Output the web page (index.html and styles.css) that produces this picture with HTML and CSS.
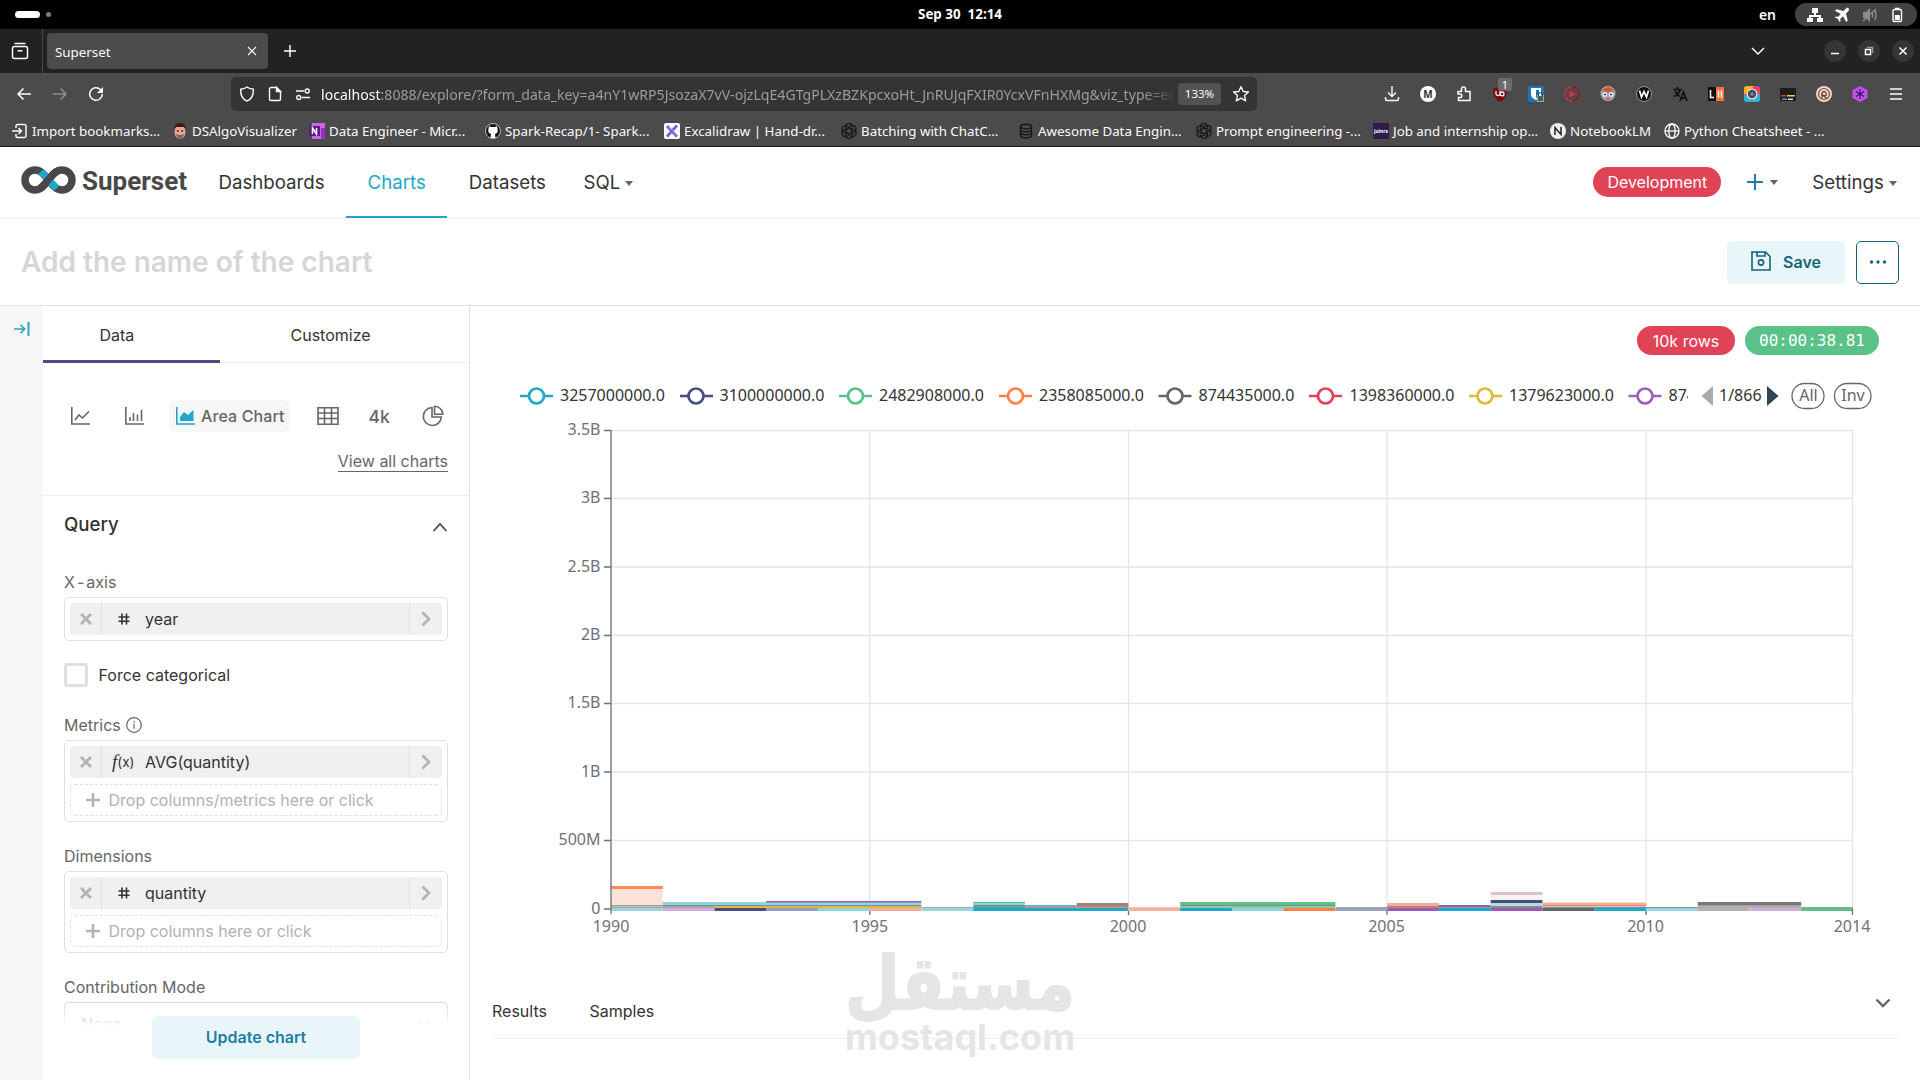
FILE: index.html
```html
<!DOCTYPE html>
<html lang="en">
<head>
    <meta charset="UTF-8">
    <meta name="viewport" content="width=device-width, initial-scale=1.0">
    <title>Superset</title>
    <link rel="stylesheet" href="styles.css">
</head>
<body>

    <!-- Desktop top bar -->
    <div class="topbar">
        <div class="workspaces"><span class="ws-active"></span><span class="ws-dot"></span></div>
        <div class="clock">Sep 30&nbsp; 12:14</div>
        <div class="status">
            <span class="lang">en</span>
            <div class="tray">
                <svg width="16" height="16" viewBox="0 0 16 16" fill="#fff"><path d="M5 1h6v5H9v2h5v3h2v4h-6v-4h2v-1H4v1h2v4H0v-4h2V8h5V6H5z"/></svg>
                <svg width="16" height="16" viewBox="0 0 16 16" fill="#fff"><path d="M14.5 1.2c-.8-.7-2-.3-3 .8L9.600 4 2.500 2.200 1 3.700l5.800 3.200-2.600 2.800-2.300-.3L1 10.500l3 1.500 1.500 3 1.100-1-.3-2.300 2.700-2.500 3.200 5.700 1.500-1.500L12 6.500l2-2c1-1 1.300-2.500.5-3.300z"/></svg>
                <svg width="16" height="16" viewBox="0 0 16 16" fill="#8b8b8b" stroke="#8b8b8b"><path stroke="none" d="M1 5h3l4-4v14l-4-4H1z"/><path fill="none" stroke-width="1.500" d="M10 5.500q1.500 2.500 0 5M12.500 3q3 5 0 10M1 14L14 2"/></svg>
                <svg width="16" height="16" viewBox="0 0 16 16"><rect x="4" y="2.500" width="8.500" height="12" rx="1.500" fill="none" stroke="#fff" stroke-width="1.400"/><path fill="#fff" d="M6 .8h4.500v2H6zM5.800 8h5v5h-5z"/></svg>
            </div>
        </div>
    </div>

    <!-- Browser tabs -->
    <div class="tabstrip">
        <div class="tab-overview">
            <svg width="18" height="18" viewBox="0 0 18 18" fill="none" stroke="#fbfbfe" stroke-width="1.500"><path d="M3.500 1.500h11"/><rect x="1.500" y="4.500" width="15" height="12" rx="2"/><path d="M6.500 8.800h5"/></svg>
        </div>
        <div class="tab">
            <span>Superset</span>
            <svg width="10" height="10" viewBox="0 0 10 10" stroke="#fbfbfe" stroke-width="1.100"><path d="M1 1l8 8M9 1L1 9"/></svg>
        </div>
        <svg class="new-tab" width="14" height="14" viewBox="0 0 14 14" stroke="#fbfbfe" stroke-width="1.500"><path d="M7 1v12M1 7h12"/></svg>
        <div class="window-controls">
            <svg class="list-tabs" width="14" height="10" viewBox="0 0 14 10" fill="none" stroke="#fbfbfe" stroke-width="1.500"><path d="M1 2l6 6 6-6"/></svg>
            <span class="win-btn"><svg width="10" height="10" viewBox="0 0 10 10" stroke="#fff" stroke-width="1.500"><path d="M1 7.500h8"/></svg></span>
            <span class="win-btn"><svg width="10" height="10" viewBox="0 0 10 10" fill="none" stroke="#fff" stroke-width="1.500"><rect x="1.500" y="3.500" width="5" height="5"/><path stroke="#999" d="M3 1.500h5.500V7"/></svg></span>
            <span class="win-btn"><svg width="10" height="10" viewBox="0 0 10 10" stroke="#fff" stroke-width="1.500"><path d="M1.500 1.500l7 7M8.500 1.500l-7 7"/></svg></span>
        </div>
    </div>

    <!-- Address bar and extensions -->
    <div class="navbar">
        <div class="nav-buttons">
            <svg width="16" height="16" viewBox="0 0 16 16" fill="none" stroke="#fbfbfe" stroke-width="1.500"><path d="M15 8H2M7.500 2.500L2 8l5.500 5.500"/></svg>
            <svg width="16" height="16" viewBox="0 0 16 16" fill="none" stroke="#8f8f8f" stroke-width="1.500"><path d="M1 8h13M8.500 2.500L14 8l-5.500 5.500"/></svg>
            <svg width="16" height="16" viewBox="0 0 16 16" fill="none" stroke="#fbfbfe" stroke-width="1.500"><path d="M12.500 3.600A6.300 6.300 0 1 0 14.300 8"/><path fill="#fbfbfe" stroke="none" d="M15 1v6H9z"/></svg>
        </div>
        <div class="urlbar">
            <svg width="16" height="16" viewBox="0 0 16 16" fill="none" stroke="#fbfbfe" stroke-width="1.400"><path d="M8 1c2 1.500 4 2 6.300 2.200C14.600 8.500 13 13 8 15 3 13 1.400 8.500 1.700 3.200 4 3 6 2.500 8 1z"/></svg>
            <svg width="16" height="16" viewBox="0 0 16 16" fill="none" stroke="#fbfbfe" stroke-width="1.400"><path d="M9.500 1.500H4A1.500 1.500 0 0 0 2.500 3v10A1.500 1.500 0 0 0 4 14.500h8a1.500 1.500 0 0 0 1.500-1.500V5.500z"/><path fill="#fbfbfe" d="M9.500 1.500v4h4z"/></svg>
            <svg width="16" height="16" viewBox="0 0 16 16" fill="none" stroke="#fbfbfe" stroke-width="1.400"><path d="M1 5h8M7 11.500h8"/><circle cx="12.200" cy="5" r="2"/><circle cx="3.800" cy="11.500" r="2"/></svg>
            <div class="url"><b>localhost</b>:8088/explore/?form_data_key=a4nY1wRP5JsozaX7vV-ojzLqE4GTgPLXzBZKpcxoHt_JnRUJqFXIR0YcxVFnHXMg&amp;viz_type=ec</div>
            <span class="zoom">133%</span>
            <svg width="18" height="18" viewBox="0 0 18 18" fill="none" stroke="#fbfbfe" stroke-width="1.300" stroke-linejoin="round"><path d="M9 1.500l2.200 5 5.300.5-4 3.600 1.200 5.300L9 13.100l-4.700 2.800 1.200-5.300-4-3.600 5.300-.5z"/></svg>
        </div>
        <div class="extensions">
            <svg width="16" height="16" viewBox="0 0 16 16" fill="none" stroke="#fbfbfe" stroke-width="1.400"><path d="M8 0v10M4 6.500l4 4 4-4M1.500 11v2a1.500 1.500 0 0 0 1.500 1.500h10a1.500 1.500 0 0 0 1.500-1.500v-2"/></svg>
            <svg width="16" height="16" viewBox="0 0 16 16"><circle cx="8" cy="8" r="8" fill="#fff"/><text class="ext-letter" x="8" y="12" fill="#333">M</text></svg>
            <svg width="16" height="16" viewBox="0 0 16 16" fill="none" stroke="#fbfbfe" stroke-width="1.500"><path d="M2 5.500h3.500V3a2 2 0 0 1 4 0v2.500H14v9H2.500v-3H4a1.800 1.800 0 0 0 0-3.600H2z"/></svg>
            <div class="ublock">
                <svg width="16" height="16" viewBox="0 0 16 16"><path fill="#800610" d="M8 0c2 1.500 4 2 7 2.500C15 9 13 13 8 16 3 13 1 9 1 2.500 4 2 6 1.500 8 0z"/><path fill="none" stroke="#fff" stroke-width="1.300" d="M4 5v3q0 1.500 2 1.500T8 8V5M8 7.500q1-1.500 2.500-1.500T12 8t-2 1.800T8 8"/></svg>
                <span class="count">1</span>
            </div>
            <svg width="16" height="16" viewBox="0 0 16 16"><rect width="16" height="16" rx="2" fill="#1b76b5"/><path fill="#fff" d="M3 2h10v6c0 3-2 5-5 6-3-1-5-3-5-6z"/><path fill="#1b76b5" d="M8 4h3v4c0 2-1 3-3 4z"/><rect x="9" y="9.500" width="7" height="6" fill="#eee"/><path fill="none" stroke="#333" d="M10.500 10V8.500a2 2 0 0 1 4 0V10"/><rect x="9.500" y="10" width="6" height="5" fill="#555"/></svg>
            <svg width="16" height="16" viewBox="0 0 16 16"><circle cx="8" cy="8" r="7.200" fill="none" stroke="#d8283f" stroke-width="1.500"/><path fill="none" stroke="#8b1826" stroke-width="1.500" d="M8 .8a7.200 7.200 0 0 1 0 14.400"/><path fill="#e22e45" d="M5.500 4.500L12 8l-6.500 3.500z"/></svg>
            <svg width="16" height="16" viewBox="0 0 16 16"><circle cx="8" cy="7.500" r="7.500" fill="#b8aca8"/><path fill="#d9532f" d="M2 5q6-8 12 0l-2 2H4zM5 12q3 4 6 0z"/><circle cx="4.800" cy="8.500" r="2.800" fill="#fff" stroke="#79a9c8"/><circle cx="11.200" cy="8.500" r="2.800" fill="#fff" stroke="#79a9c8"/><circle cx="5" cy="8.500" r="1.100" fill="#23405c"/><circle cx="11" cy="8.500" r="1.100" fill="#23405c"/></svg>
            <svg width="16" height="16" viewBox="0 0 16 16"><circle cx="8" cy="8" r="7.500" fill="#111" stroke="#999"/><path fill="none" stroke="#fff" stroke-width="1.700" d="M3.500 4.500l2 6.500L8 5.500l2.500 5.500 2-6.500"/></svg>
            <svg width="16" height="16" viewBox="0 0 16 16" fill="none" stroke="#111" stroke-width="1.700"><path d="M1 3.500h9M5.500 1v2.500M2 10.500q5-2 6-7M3 5q1.500 3.500 5 5.500M8 15l3.500-9L15 15M9 12.200h5"/></svg>
            <svg width="16" height="16" viewBox="0 0 16 16"><path fill="#111" d="M0 1h8v14H0z"/><path fill="#ff7139" d="M8 1h8v14H8z"/><path fill="none" stroke="#fff" stroke-width="1.500" d="M2.500 4v7.500H6M10.500 4.500v7M13.500 4.500v7"/></svg>
            <svg width="16" height="16" viewBox="0 0 16 16"><rect width="16" height="16" rx="3" fill="#f43f6b"/><path fill="#ffb21c" d="M0 3a3 3 0 0 1 3-3h7L0 9z"/><path fill="#25b6d8" d="M0 8l9 8H3a3 3 0 0 1-3-3zM16 7v6a3 3 0 0 1-3 3H7z"/><circle cx="8" cy="8" r="5.500" fill="#e9e9e9"/><circle cx="8" cy="8" r="4.200" fill="#3c4654"/><circle cx="8" cy="8" r="2" fill="#72839a"/></svg>
            <svg width="16" height="16" viewBox="0 0 16 16"><rect y="2" width="16" height="13" rx="1" fill="#1c1c1c"/><path fill="#e33" d="M1 9h5v1.500H1z"/><path fill="#fc3" d="M7 9h8v1.500H7z"/><path fill="#3ad" d="M2 12.500h5V14H2z"/><path fill="#ddd" d="M8 12.500h5V14H8z"/></svg>
            <svg width="16" height="16" viewBox="0 0 16 16"><circle cx="8" cy="8" r="8" fill="#f8d4c6"/><circle cx="8" cy="8" r="5.500" fill="none" stroke="#654" stroke-width="1.200"/><path fill="none" stroke="#543" stroke-width="1.300" d="M6 12V7q2-3 4 0t-3 2.500l4 3"/></svg>
            <svg width="16" height="16" viewBox="0 0 16 16"><path fill="#bd4fef" d="M8 0l7.500 4v8L8 16 .5 12V4z"/><path stroke="#3e1458" stroke-width="1.200" d="M8 3v10M4 5.500l8 5M12 5.500l-8 5"/></svg>
            <svg width="16" height="16" viewBox="0 0 16 16" stroke="#fbfbfe" stroke-width="1.500"><path d="M2 3h12M2 8h12M2 13h12"/></svg>
        </div>
    </div>

    <div class="bookmarks">
        <div class="bookmark"><svg width="16" height="16" viewBox="0 0 16 16" fill="none" stroke="#fbfbfe" stroke-width="1.500"><path d="M4 5V3a1.500 1.500 0 0 1 1.500-1.500h7A1.500 1.500 0 0 1 14 3v10a1.500 1.500 0 0 1-1.500 1.500h-7A1.500 1.500 0 0 1 4 13v-2M0 8h9.500M6.500 5l3 3-3 3"/></svg><span>Import bookmarks...</span></div>
        <div class="bookmark"><svg width="16" height="16" viewBox="0 0 16 16"><ellipse cx="8" cy="9" rx="5.500" ry="7" fill="#e8a68f"/><path fill="#3a1d1d" d="M2 6q0-6 6-6t6 6l-2-2H4z"/><path fill="#7a6a62" d="M4 11q4 2 8 0-1 5-4 5t-4-5z"/><circle cx="5.800" cy="8" r="1" fill="#333"/><circle cx="10.200" cy="8" r="1" fill="#333"/></svg><span>DSAlgoVisualizer</span></div>
        <div class="bookmark"><svg width="16" height="16" viewBox="0 0 16 16"><path fill="#ca64ea" d="M3 0h13v16H3z"/><path fill="#9332bf" d="M12 5h4v11h-4z"/><rect y="3" width="11" height="10" fill="#5b1f87"/><path fill="none" stroke="#fff" stroke-width="1.500" d="M3.500 11V5l4 6V5"/></svg><span>Data Engineer - Micr...</span></div>
        <div class="bookmark"><svg width="16" height="16" viewBox="0 0 16 16"><circle cx="8" cy="8" r="7.500" fill="#161616" stroke="#ddd" stroke-width=".8"/><path fill="#fff" d="M4 3l2 1h4l2-1 .5 2.500q1 4.500-2.500 5.500l.5 4h-5l.5-4Q2.500 10 3.500 5.500z"/></svg><span>Spark-Recap/1- Spark...</span></div>
        <div class="bookmark"><svg width="16" height="16" viewBox="0 0 16 16"><rect width="16" height="16" rx="2" fill="#fff"/><path stroke="#6965db" stroke-width="2.800" d="M3 3l10 10.500M13 2.500L3 13.500"/><path stroke="#c7a3ef" d="M4 2.500l9 10"/></svg><span>Excalidraw | Hand-dr...</span></div>
        <div class="bookmark"><svg width="16" height="16" viewBox="0 0 16 16" fill="none" stroke="#161616" stroke-width="1.200"><g id="knot"><path id="petal" d="M8 5L4.500 7V3.500a3.300 3.300 0 0 1 6-1.700L12 4.500"/><use href="#petal" transform="rotate(60 8 8)"/><use href="#petal" transform="rotate(120 8 8)"/><use href="#petal" transform="rotate(180 8 8)"/><use href="#petal" transform="rotate(240 8 8)"/><use href="#petal" transform="rotate(300 8 8)"/></g></svg><span>Batching with ChatC...</span></div>
        <div class="bookmark"><svg width="16" height="16" viewBox="0 0 16 16" fill="none" stroke="#161616" stroke-width="1.400"><ellipse cx="8" cy="3.500" rx="5.500" ry="2.300"/><path d="M2.500 3.500v9q0 2.300 5.500 2.300t5.500-2.300v-9M2.500 6.500q0 2.300 5.500 2.300t5.500-2.300M2.500 9.500q0 2.300 5.500 2.300t5.500-2.300"/></svg><span>Awesome Data Engin...</span></div>
        <div class="bookmark"><svg width="16" height="16" viewBox="0 0 16 16" fill="none" stroke="#161616" stroke-width="1.200"><use href="#knot"/></svg><span>Prompt engineering -...</span></div>
        <div class="bookmark"><svg width="16" height="16" viewBox="0 0 16 16"><rect width="16" height="16" fill="#2c1d4d"/><text class="joinrs" x="8" y="9.500">joinrs</text></svg><span>Job and internship op...</span></div>
        <div class="bookmark"><svg width="16" height="16" viewBox="0 0 16 16"><circle cx="8" cy="8" r="8" fill="#eee"/><path fill="none" stroke="#222" stroke-width="1.500" d="M5 12V4.500l6 7V4"/></svg><span>NotebookLM</span></div>
        <div class="bookmark"><svg width="16" height="16" viewBox="0 0 16 16" fill="none" stroke="#fbfbfe" stroke-width="1.300"><circle cx="8" cy="8" r="7"/><ellipse cx="8" cy="8" rx="3.200" ry="7"/><path d="M1 8h14"/></svg><span>Python Cheatsheet - ...</span></div>
    </div>

    <!-- Superset header -->
    <header class="header">
        <svg class="logo" width="168" height="34" viewBox="20 162 168 34">
            <path fill="none" stroke="#484848" stroke-width="7.500" d="M48.500 180c-5-6.500-8-10-13.500-10a10 10 0 0 0 0 20c5.500 0 8.500-3.500 13.500-10s8-10 13.500-10a10 10 0 0 1 0 20c-5.500 0-8.500-3.500-13.500-10"/>
            <path fill="none" stroke="#20a7c9" stroke-width="7.500" d="M41 171.500l15.500 17"/>
            <path fill="none" stroke="#484848" stroke-width="7.500" d="M40 188.500c5-3.500 12-15.500 17-17"/>
            <text class="logo-text" x="82" y="189.500" textLength="105">Superset</text>
        </svg>
        <nav class="menu">
            <a>Dashboards</a>
            <a class="active">Charts</a>
            <a>Datasets</a>
            <a class="sql">SQL <i class="caret"></i></a>
        </nav>
        <div class="header-right">
            <span class="badge red">Development</span>
            <span class="add"><svg width="16" height="16" viewBox="0 0 16 16" stroke="#1a80a8" stroke-width="2"><path d="M8 0v16M0 8h16"/></svg><i class="caret"></i></span>
            <span class="settings">Settings <i class="caret"></i></span>
        </div>
    </header>

    <div class="title-bar">
        <h1>Add the name of the chart</h1>
        <button class="btn save">
            <svg width="20" height="20" viewBox="0 0 20 20" fill="none" stroke="#156378" stroke-width="1.600"><path d="M1 1h13.500l4.500 4.500V19H1z"/><path d="M6 1v4h8V1"/><circle cx="10" cy="11.500" r="2.600"/></svg>
            Save
        </button>
        <button class="btn more"><svg width="18" height="4" viewBox="0 0 18 4" fill="#156378"><circle cx="2.500" cy="2" r="1.700"/><circle cx="9" cy="2" r="1.700"/><circle cx="15.500" cy="2" r="1.700"/></svg></button>
    </div>

    <main class="explore">
        <aside class="rail">
            <svg width="16" height="16" viewBox="0 0 16 16" fill="none" stroke="#20a7c9" stroke-width="1.600"><path d="M0 8h10.500M6.500 3.800L10.700 8l-4.200 4.200"/><path stroke-width="2" d="M14.500 1v14"/></svg>
        </aside>

        <!-- Control panel -->
        <section class="panel">
            <div class="tabs">
                <div class="panel-tab selected">Data</div>
                <div class="panel-tab">Customize</div>
            </div>
            <div class="viz">
                <div class="viz-types">
                    <svg class="viz-line" width="20" height="20" viewBox="0 0 20 20" fill="none" stroke="#666" stroke-width="1.600"><path d="M1.800 1v17H20M5 14l4-5 3.500 3L19 5.500"/></svg>
                    <svg class="viz-bar" width="20" height="20" viewBox="0 0 20 20" fill="none" stroke="#666" stroke-width="1.600"><path d="M1.800 1v17H20M6 15v-4M9.500 15V7M13.500 15V8.500M17.500 15V4"/></svg>
                    <div class="viz-active">
                        <svg width="20" height="20" viewBox="0 0 20 20"><path fill="none" stroke="#20a7c9" stroke-width="1.600" d="M1.800 1v17H20"/><path fill="#20a7c9" d="M5 15v-4l4-5 4 3 5.500-5v11z"/></svg>
                        <span>Area Chart</span>
                    </div>
                    <svg class="viz-table" width="22" height="20" viewBox="0 0 22 20" fill="none" stroke="#666" stroke-width="1.600"><path d="M1 1.800h20v16.400H1zM1 7h20M1 12.500h20M7.500 2v16M14.500 2v16"/></svg>
                    <span class="viz-number">4k</span>
                    <svg class="viz-pie" width="22" height="22" viewBox="0 0 22 22" fill="none" stroke="#666" stroke-width="1.600"><path d="M10 2.500a9 9 0 1 0 9.300 9.500H10z"/><path d="M12.500 1.200v8h8.300a8.300 8.300 0 0 0-8.300-8z"/></svg>
                </div>
                <a class="view-all">View all charts</a>
            </div>
            <div class="query">
                <div class="query-head">
                    <span>Query</span>
                    <svg width="16" height="12" viewBox="0 0 16 12" fill="none" stroke="#444" stroke-width="1.700"><path d="M1.500 10L8 3l6.500 7"/></svg>
                </div>

                <label class="x-label">X<span class="dash">-</span>axis</label>
                <div class="box">
                    <div class="pill">
                        <span class="remove"><svg width="12" height="12" viewBox="0 0 12 12" stroke="#b2b2b2" stroke-width="2.800"><path d="M1 1l10 10M11 1L1 11"/></svg></span>
                        <span class="type"><svg width="12" height="12" viewBox="0 0 12 12" stroke="#333" stroke-width="1.600"><path d="M4 .5v11M8.500 .5v11M.5 4h11M.5 8.200h11"/></svg></span>
                        <span class="name">year</span>
                        <span class="open"><svg width="10" height="16" viewBox="0 0 10 16" fill="none" stroke="#b2b2b2" stroke-width="2.600"><path d="M1.500 1.500L8 8l-6.500 6.500"/></svg></span>
                    </div>
                </div>

                <div class="check"><span class="checkbox"></span>Force categorical</div>

                <label class="metrics-label">Metrics <svg width="16" height="16" viewBox="0 0 16 16" fill="none" stroke="#666" stroke-width="1.200"><circle cx="8" cy="8" r="7.300"/><path d="M8 6.800v5M8 4v1.400"/></svg></label>
                <div class="box">
                    <div class="pill">
                        <span class="remove"><svg width="12" height="12" viewBox="0 0 12 12" stroke="#b2b2b2" stroke-width="2.800"><path d="M1 1l10 10M11 1L1 11"/></svg></span>
                        <span class="type fx"><i>f</i>(x)</span>
                        <span class="name">AVG(quantity)</span>
                        <span class="open"><svg width="10" height="16" viewBox="0 0 10 16" fill="none" stroke="#b2b2b2" stroke-width="2.600"><path d="M1.500 1.500L8 8l-6.500 6.500"/></svg></span>
                    </div>
                    <div class="drop"><svg width="14" height="14" viewBox="0 0 14 14" stroke="#b2b2b2" stroke-width="2.600"><path d="M7 0v14M0 7h14"/></svg>Drop columns/metrics here or click</div>
                </div>

                <label>Dimensions</label>
                <div class="box">
                    <div class="pill">
                        <span class="remove"><svg width="12" height="12" viewBox="0 0 12 12" stroke="#b2b2b2" stroke-width="2.800"><path d="M1 1l10 10M11 1L1 11"/></svg></span>
                        <span class="type"><svg width="12" height="12" viewBox="0 0 12 12" stroke="#333" stroke-width="1.600"><path d="M4 .5v11M8.500 .5v11M.5 4h11M.5 8.200h11"/></svg></span>
                        <span class="name">quantity</span>
                        <span class="open"><svg width="10" height="16" viewBox="0 0 10 16" fill="none" stroke="#b2b2b2" stroke-width="2.600"><path d="M1.500 1.500L8 8l-6.500 6.500"/></svg></span>
                    </div>
                    <div class="drop"><svg width="14" height="14" viewBox="0 0 14 14" stroke="#b2b2b2" stroke-width="2.600"><path d="M7 0v14M0 7h14"/></svg>Drop columns here or click</div>
                </div>

                <label>Contribution Mode</label>
                <div class="select">
                    <span>None</span>
                    <svg width="14" height="10" viewBox="0 0 14 10" fill="none" stroke="#999" stroke-width="1.600"><path d="M1 2l6 6 6-6"/></svg>
                </div>
            </div>
            <div class="update"><button class="btn">Update chart</button></div>
        </section>

        <!-- Chart -->
        <section class="chart">
            <div class="chart-badges">
                <span class="badge red">10k rows</span>
                <span class="badge green">00:00:38.81</span>
            </div>

            <svg class="plot" width="1450" height="580" viewBox="470 370 1450 580">
                <defs>
                    <clipPath id="legend-clip"><rect x="500" y="370" width="1188" height="50"/></clipPath>
                </defs>

                <g class="legend" clip-path="url(#legend-clip)">
                    <g stroke="#1fa8c9"><path d="M520 396h33"/><circle cx="536.500" cy="396" r="7.500"/></g>
                    <text x="560" y="401">3257000000.0</text>
                    <g stroke="#454e7c"><path d="M680 396h33"/><circle cx="696" cy="396" r="7.500"/></g>
                    <text x="719.500" y="401">3100000000.0</text>
                    <g stroke="#5ac189"><path d="M839 396h33"/><circle cx="855.500" cy="396" r="7.500"/></g>
                    <text x="879" y="401">2482908000.0</text>
                    <g stroke="#ff7f44"><path d="M999 396h33"/><circle cx="1015.500" cy="396" r="7.500"/></g>
                    <text x="1039" y="401">2358085000.0</text>
                    <g stroke="#666666"><path d="M1158.500 396h33"/><circle cx="1175" cy="396" r="7.500"/></g>
                    <text x="1198.500" y="401">874435000.0</text>
                    <g stroke="#e04355"><path d="M1309 396h33"/><circle cx="1325.500" cy="396" r="7.500"/></g>
                    <text x="1349.500" y="401">1398360000.0</text>
                    <g stroke="#e0b93a"><path d="M1469 396h33"/><circle cx="1485" cy="396" r="7.500"/></g>
                    <text x="1509" y="401">1379623000.0</text>
                    <g stroke="#a15fb8"><path d="M1628.500 396h33"/><circle cx="1645" cy="396" r="7.500"/></g>
                    <text x="1668.500" y="401">874</text>
                </g>
                <path fill="#aaa" d="M1713 386v20l-11.500-10z"/>
                <text class="pager" x="1719" y="401">1/866</text>
                <path fill="#2f4554" d="M1767 386v20l11.500-10z"/>
                <g class="selector">
                    <rect x="1792" y="383.500" width="32" height="25" rx="12.500"/>
                    <text x="1808.500" y="401">All</text>
                    <rect x="1834.500" y="383.500" width="36.500" height="25" rx="12.500"/>
                    <text x="1853" y="401">Inv</text>
                </g>

                <path class="grid" d="M611 430.500H1853M611 498.500H1853M611 567H1853M611 635.500H1853M611 703.500H1853M611 772H1853M611 840.500H1853M869.800 430V909M1128.500 430V909M1387 430V909M1646 430V909M1852.500 430V909"/>

                <!-- first row: base series per year, 51.75px each -->
                <g class="base">
                    <rect x="611" y="908" width="51.750" height="3" fill="#98d5e0"/>
                    <rect x="662.700" y="908" width="51.750" height="3" fill="#cfaedb"/>
                    <rect x="714.500" y="908" width="51.750" height="3" fill="#454e7c"/>
                    <rect x="766.200" y="908" width="51.750" height="3" fill="#96a0c0"/>
                    <rect x="818" y="908" width="51.750" height="3" fill="#8fd3df"/>
                    <rect x="869.700" y="908" width="51.750" height="3" fill="#f9a89c"/>
                    <rect x="921.500" y="908" width="51.750" height="3" fill="#98d5e0"/>
                    <rect x="973.200" y="908" width="155.200" height="3" fill="#1fa8c9"/>
                    <rect x="1128.500" y="908" width="51.750" height="3" fill="#f9ae9f"/>
                    <rect x="1180.200" y="908" width="51.750" height="3" fill="#1fa8c9"/>
                    <rect x="1232" y="908" width="51.750" height="3" fill="#8fd3df"/>
                    <rect x="1283.700" y="908" width="51.750" height="3" fill="#ff7f44"/>
                    <rect x="1335.500" y="908" width="51.750" height="3" fill="#96a0c0"/>
                    <rect x="1387.200" y="908" width="51.750" height="3" fill="#a056b5"/>
                    <rect x="1439" y="908" width="51.750" height="3" fill="#1fa8c9"/>
                    <rect x="1490.700" y="908" width="51.750" height="3" fill="#a056b5"/>
                    <rect x="1542.500" y="908" width="51.750" height="3" fill="#666"/>
                    <rect x="1594.200" y="908" width="51.750" height="3" fill="#1fa8c9"/>
                    <rect x="1646" y="908" width="51.750" height="3" fill="#98d5e0"/>
                    <rect x="1697.700" y="908" width="51.750" height="3" fill="#b2b2b2"/>
                    <rect x="1749.500" y="908" width="51.750" height="3" fill="#cfaedb"/>
                    <rect x="1801.200" y="908" width="51.750" height="3" fill="#5ac189"/>
                </g>
                <!-- stacked series above it -->
                <rect x="611" y="889" width="51.750" height="16" fill="#fde2d9"/>
                <rect x="611" y="886" width="51.750" height="3" fill="#ff8a55"/>
                <rect x="611" y="905" width="51.750" height="1" fill="#7fa9ad"/>
                <rect x="611" y="906" width="51.750" height="1" fill="#e0b9a8"/>
                <rect x="611" y="907" width="310" height="1" fill="#a5a5a5"/>
                <rect x="662.700" y="902" width="258.700" height="3" fill="#8fd3df"/>
                <rect x="662.700" y="905" width="258.700" height="1" fill="#6597aa"/>
                <rect x="662.700" y="906" width="51.750" height="1" fill="#b3a389"/>
                <rect x="714.500" y="906" width="206.900" height="2" fill="#e0b93a"/>
                <rect x="766.200" y="901" width="155.200" height="1.500" fill="#9560b5"/>
                <rect x="921.500" y="907" width="51.750" height="1" fill="#aaa"/>
                <rect x="973.200" y="902" width="51.750" height="1" fill="#5ac189"/>
                <rect x="973.200" y="903" width="51.750" height="2" fill="#8fd3df"/>
                <rect x="973.200" y="905" width="51.750" height="3" fill="#5f9da5"/>
                <rect x="1025" y="905" width="51.750" height="2" fill="#6fb0bb"/>
                <rect x="1025" y="907" width="51.750" height="1" fill="#e08578"/>
                <rect x="1076.700" y="903" width="51.750" height="3" fill="#a27f79"/>
                <rect x="1076.700" y="906" width="51.750" height="1" fill="#8a9a95"/>
                <rect x="1076.700" y="907" width="51.750" height="1" fill="#d98a7d"/>
                <rect x="1128.500" y="907" width="51.750" height="1" fill="#ead09a"/>
                <rect x="1180.200" y="902" width="155.200" height="3" fill="#5ac189"/>
                <rect x="1180.200" y="905" width="155.200" height="1" fill="#7d8f86"/>
                <rect x="1180.200" y="906" width="155.200" height="2" fill="#93c4ae"/>
                <rect x="1335.500" y="907" width="51.750" height="1" fill="#aaa"/>
                <rect x="1387.200" y="903" width="51.750" height="3" fill="#f5ac9c"/>
                <rect x="1387.200" y="906" width="51.750" height="1" fill="#8c8f8c"/>
                <rect x="1387.200" y="907" width="51.750" height="1" fill="#d97668"/>
                <rect x="1439" y="905" width="51.750" height="2" fill="#8d5fb0"/>
                <rect x="1439" y="907" width="51.750" height="1" fill="#8da7a5"/>
                <rect x="1490.700" y="892" width="51.750" height="3" fill="#d9c2c2"/>
                <rect x="1490.700" y="895" width="51.750" height="5" fill="#f8f3f2"/>
                <rect x="1490.700" y="900" width="51.750" height="3" fill="#454e7c"/>
                <rect x="1490.700" y="903" width="51.750" height="3" fill="#b5dbe2"/>
                <rect x="1490.700" y="906" width="51.750" height="2" fill="#7f8f8c"/>
                <rect x="1542.500" y="902" width="103.500" height="1" fill="#fbdccf"/>
                <rect x="1542.500" y="903" width="103.500" height="2" fill="#f5ac9c"/>
                <rect x="1542.500" y="905" width="103.500" height="1" fill="#e8825f"/>
                <rect x="1542.500" y="906" width="103.500" height="1" fill="#f3c4b2"/>
                <rect x="1542.500" y="907" width="155.200" height="1" fill="#5f9da5"/>
                <rect x="1697.700" y="902" width="103.500" height="3" fill="#777"/>
                <rect x="1697.700" y="905" width="103.500" height="1" fill="#a89a9a"/>
                <rect x="1697.700" y="906" width="103.500" height="2" fill="#a9b5ad"/>
                <rect x="1801.200" y="907" width="51.750" height="1" fill="#7fae95"/>

                <path class="axis" d="M611 430V914M604 430.500h7M604 498.500h7M604 567h7M604 635.500h7M604 703.500h7M604 772h7M604 840.500h7M604 909h7M869.800 911v4M1128.500 911v4M1387 911v4M1646 911v4M1852.500 909v6"/>
                <g class="y-labels">
                    <text x="600.500" y="435">3.5B</text>
                    <text x="600.500" y="503">3B</text>
                    <text x="600.500" y="571.500">2.5B</text>
                    <text x="600.500" y="640">2B</text>
                    <text x="600.500" y="708">1.5B</text>
                    <text x="600.500" y="776.500">1B</text>
                    <text x="600.500" y="845">500M</text>
                    <text x="600.500" y="913.500">0</text>
                </g>
                <g class="x-labels">
                    <text x="611" y="932">1990</text>
                    <text x="869.800" y="932">1995</text>
                    <text x="1128" y="932">2000</text>
                    <text x="1386.500" y="932">2005</text>
                    <text x="1645.500" y="932">2010</text>
                    <text x="1852" y="932">2014</text>
                </g>
            </svg>

            <div class="results">
                <span>Results</span>
                <span>Samples</span>
                <svg width="16" height="10" viewBox="0 0 16 10" fill="none" stroke="#666" stroke-width="2.400"><path d="M1.500 1.500L8 8l6.500-6.500"/></svg>
            </div>
        </section>
    </main>

    <svg class="watermark" width="240" height="120" viewBox="840 945 240 120">
        <text class="wm-ar" x="960" y="1009" textLength="230" lengthAdjust="spacingAndGlyphs">مستقل</text>
        <text class="wm-en" x="960" y="1050" textLength="230" lengthAdjust="spacingAndGlyphs">mostaql.com</text>
    </svg>

</body>
</html>
```
FILE: styles.css
```css
* {
    box-sizing: border-box;
}

body {
    margin: 0;
    height: 1080px;
    overflow: hidden;
    background-color: #fff;
    color: #333;
    font-family: Inter, sans-serif;
    font-size: 16px;
    display: flex;
    flex-direction: column;
}

svg {
    display: block;
    flex: none;
}

/* Desktop top bar */
.topbar {
    height: 29px;
    background-color: #000;
    color: #fff;
    font: 700 13.4px/26px "Noto Sans", sans-serif;
    display: grid;
    grid-template-columns: 1fr auto 1fr;
    align-items: center;
    padding: 0 3px 0 15px;
}

.workspaces {
    display: flex;
    align-items: center;
    gap: 6px;
}

.ws-active {
    width: 25px;
    height: 7px;
    border-radius: 4px;
    background-color: #fff;
}

.ws-dot {
    width: 5px;
    height: 5px;
    border-radius: 50%;
    background-color: #808080;
}

.clock {
    padding-right: 12px;
    padding-bottom: 2px;
}

.status {
    display: flex;
    align-items: center;
    justify-content: flex-end;
    gap: 19px;
}

.lang {
    font-size: 14px;
    font-weight: 600;
}

.tray {
    width: 122px;
    height: 23px;
    border-radius: 12px;
    background-color: #434343;
    display: flex;
    align-items: center;
    justify-content: space-between;
    padding: 0 12px;
}

/* Tab strip */
.tabstrip {
    height: 44px;
    background-color: #222;
    color: #fbfbfe;
    font: 13.33px "Noto Sans", sans-serif;
    display: flex;
    align-items: center;
}

.tab-overview {
    width: 43px;
    height: 44px;
    border-right: 1px solid #4a4a4a;
    display: flex;
    align-items: center;
    padding-left: 11px;
}

.tab {
    width: 221px;
    height: 36px;
    margin-left: 4px;
    border-radius: 4px;
    background-color: #4b4b4b;
    display: flex;
    align-items: center;
    justify-content: space-between;
    padding: 0 11px 0 8px;
}

.tab span {
    padding-top: 1px;
}

.new-tab {
    margin-left: 14.5px;
}

.window-controls {
    margin-left: auto;
    display: flex;
    align-items: center;
    gap: 12px;
    padding-right: 6px;
}

.list-tabs {
    margin-right: 47px;
}

.win-btn {
    width: 22px;
    height: 22px;
    border-radius: 50%;
    background-color: #353535;
    display: flex;
    align-items: center;
    justify-content: center;
}

/* Address bar */
.navbar {
    height: 42px;
    background-color: #4b4b4b;
    display: flex;
    align-items: center;
}

.nav-buttons {
    width: 231px;
    display: flex;
    gap: 20px;
    padding-left: 16px;
}

.urlbar {
    width: 1026px;
    height: 34px;
    border-radius: 5px;
    background-color: #343434;
    display: flex;
    align-items: center;
    gap: 12px;
    padding: 0 8px;
    font: 14.1px "Noto Sans", sans-serif;
    color: #9c9c9e;
}

.url {
    flex: 1;
    min-width: 0;
    margin-left: -2px;
    margin-right: -8px;
    white-space: nowrap;
    overflow: hidden;
    mask-image: linear-gradient(to right, #000 822px, transparent 856px);
}

.url b {
    font-weight: 400;
    color: #fbfbfe;
}

.zoom {
    width: 43px;
    height: 22px;
    border-radius: 4px;
    background-color: #525252;
    color: #fbfbfe;
    font-size: 11.5px;
    line-height: 22px;
    text-align: center;
}

.urlbar .zoom + svg {
    margin-left: -1px;
    margin-right: -1px;
}

.extensions {
    margin-left: auto;
    display: flex;
    gap: 20px;
    padding-right: 16px;
}

.ext-letter {
    font: 700 10px "Noto Sans", sans-serif;
    text-anchor: middle;
}

.ublock {
    position: relative;
}

.count {
    position: absolute;
    left: 6px;
    top: -8px;
    width: 14px;
    height: 13px;
    border-radius: 2px;
    background-color: #6b6b6b;
    color: #fff;
    font: 11px/13px "Noto Sans", sans-serif;
    text-align: center;
}

/* Bookmarks */
.bookmarks {
    height: 32px;
    background-color: #4b4b4b;
    border-bottom: 1px solid #1c1b22;
    color: #fbfbfe;
    font: 13.33px "Noto Sans", sans-serif;
    display: grid;
    grid-template-columns: 160px 137px 176px 179px 177px 177px 178px 177px 177px 114px auto;
    align-items: center;
    padding-left: 12px;
}

.bookmark {
    display: flex;
    align-items: center;
    gap: 4px;
    white-space: nowrap;
}

.joinrs {
    font: 700 5px "Noto Sans", sans-serif;
    fill: #fff;
    text-anchor: middle;
}

/* Superset header */
.header {
    height: 72px;
    border-bottom: 2px solid #f5f5f5;
    display: flex;
    font-size: 18.67px;
    padding: 0 23px 0 20px;
}

.logo {
    margin-top: 15px;
}

.logo-text {
    font: 700 26px Roboto, sans-serif;
    fill: #484848;
}

.menu {
    display: flex;
    margin-left: 9px;
}

.menu a {
    height: 71px;
    line-height: 71px;
    padding: 0 21.500px;
    border-bottom: 2px solid transparent;
}

.menu a.active {
    color: #20a7c9;
    border-bottom-color: #20a7c9;
}

.menu a.sql {
    padding-left: 16px;
}

.caret {
    display: inline-block;
    border: 4px solid transparent;
    border-top: 5px solid #666;
    border-bottom: 0;
    vertical-align: 3px;
}

.header-right {
    margin-left: auto;
    display: flex;
    align-items: center;
}

.badge {
    border-radius: 15px;
    color: #fff;
    font-size: 16px;
    text-align: center;
}

.red {
    background-color: #e04355;
}

.green {
    background-color: #5ac189;
}

.header .badge {
    width: 128px;
    line-height: 30px;
}

.add {
    display: flex;
    align-items: center;
    gap: 7px;
    margin: 0 34px 0 26px;
}

/* Chart title */
.title-bar {
    height: 87px;
    border-bottom: 1px solid #e0e0e0;
    display: flex;
    align-items: center;
    padding: 0 21px;
}

h1 {
    margin: 0 auto 0 0;
    font-size: 28px;
    font-weight: 600;
    color: #d6d6d6;
}

.btn {
    height: 43px;
    border: 0;
    border-radius: 5px;
    background-color: #e9f6f9;
    color: #156378;
    font: 600 16px/43px Inter, sans-serif;
    display: flex;
    align-items: center;
    justify-content: center;
}

.save {
    width: 118px;
    gap: 12px;
    margin-right: 11px;
}

.save svg {
    margin-bottom: 3px;
}

.more {
    width: 43px;
    padding: 0;
    border: 1px solid #156378;
    background-color: #fff;
}

/* Explore view */
.explore {
    flex: 1;
    min-height: 0;
    display: flex;
}

.rail {
    width: 43px;
    background-color: #f7f7f7;
    padding: 15px 0 0 14px;
}

.panel {
    position: relative;
    width: 427px;
    border-right: 1px solid #e0e0e0;
    overflow: hidden;
}

.tabs {
    height: 57px;
    border-bottom: 1px solid #f0f0f0;
    display: flex;
}

.panel-tab {
    height: 57px;
    line-height: 59px;
    padding: 0 70.5px;
}

.panel-tab.selected {
    width: 177px;
    padding: 0 0 0 56.5px;
    border-bottom: 3px solid #484f80;
}

.viz {
    height: 133px;
    border-bottom: 1px solid #f0f0f0;
    padding: 37px 21px 0 27px;
}

.viz-types {
    height: 32px;
    display: flex;
    align-items: center;
    color: #666;
}

.viz-bar {
    margin-left: 34px;
}

.viz-active {
    width: 121px;
    height: 32px;
    margin-left: 25px;
    border-radius: 7px;
    background-color: #f7f7f7;
    display: flex;
    align-items: center;
    gap: 6px;
    padding-left: 6px;
    font-weight: 500;
    letter-spacing: 0.1px;
    white-space: nowrap;
}

.viz-table {
    margin-left: 26.5px;
}

.viz-number {
    margin-left: 30px;
    font-size: 17.5px;
    font-weight: 500;
}

.viz-pie {
    margin-left: auto;
    margin-right: 4px;
}

.view-all {
    display: block;
    width: fit-content;
    margin: 19px 0 0 auto;
    line-height: 20px;
    border-bottom: 1px solid #666;
    color: #666;
}

.query {
    padding: 0 21px;
}

.query-head {
    height: 58px;
    display: flex;
    align-items: center;
    justify-content: space-between;
    font-size: 18.67px;
    font-weight: 500;
}

.query-head span {
    padding-bottom: 1px;
}

.query-head svg {
    margin-top: 3px;
}

.query label {
    height: 20px;
    margin: 24px 0 5px;
    display: flex;
    align-items: center;
    gap: 5px;
    color: #666;
}

.query .x-label {
    margin-top: 18px;
    gap: 0;
}

.query .metrics-label {
    margin-top: 28px;
}

.dash {
    padding: 0 2px;
}

.box {
    border: 1px solid #e0e0e0;
    border-radius: 5px;
    padding: 5px;
    display: grid;
    gap: 6px;
}

.pill {
    height: 32px;
    border-radius: 3px;
    background-color: #f0f0f0;
    display: flex;
}

.pill span {
    display: flex;
    align-items: center;
}

.pill .remove {
    width: 32px;
    border-right: 1px solid #e0e0e0;
    justify-content: center;
}

.pill .type {
    width: 43px;
    padding-left: 16px;
}

.pill .fx {
    padding-left: 10px;
    font-size: 13.5px;
}

.fx i {
    font: italic 19px "Liberation Serif", serif;
}

.pill .name {
    flex: 1;
}

.pill .open {
    width: 33px;
    border-left: 1px solid #e0e0e0;
    justify-content: center;
}

.drop {
    height: 32px;
    border: 1px dashed #e0e0e0;
    border-radius: 5px;
    display: flex;
    align-items: center;
    gap: 8.5px;
    padding-left: 15px;
    color: #b2b2b2;
}

.check {
    height: 24px;
    margin-top: 22px;
    display: flex;
    align-items: center;
    gap: 10.5px;
}

.checkbox {
    width: 24px;
    height: 24px;
    border: 3px solid #e0e0e0;
    border-radius: 3px;
}

.select {
    height: 43px;
    border: 1px solid #d0d0d0;
    border-radius: 5px;
    display: flex;
    align-items: center;
    justify-content: space-between;
    padding: 0 16px;
    color: #777;
}

/* Sticky footer that fades the controls out */
.update {
    position: absolute;
    left: 0;
    right: 0;
    bottom: 0;
    height: 82px;
    background: linear-gradient(to bottom, rgba(255, 255, 255, 0), #fff 28px);
    display: flex;
    justify-content: center;
    padding-top: 18px;
}

.update .btn {
    width: 208px;
    line-height: 41px;
    padding-bottom: 2px;
    color: #1a7fa8;
}

/* Chart area */
.chart {
    flex: 1;
}

.chart-badges {
    display: flex;
    justify-content: flex-end;
    gap: 10px;
    height: 64px;
    padding: 20px 41px 0 0;
}

.chart-badges .badge {
    width: 98px;
    height: 29px;
    line-height: 30px;
}

.chart-badges .green {
    width: 134px;
    font-family: "DejaVu Sans Mono", monospace;
    line-height: 29px;
}

.plot text {
    font: 16px "Noto Sans", sans-serif;
    fill: #333;
}

.legend g {
    fill: #fff;
    stroke-width: 2.700;
}

.selector rect {
    fill: none;
    stroke: #666;
    stroke-width: 1.300;
}

.plot .selector text {
    fill: #666;
    text-anchor: middle;
}

.grid {
    stroke: #e0e6f1;
    stroke-width: 1.330;
}

.axis {
    fill: none;
    stroke: #6e7079;
    stroke-width: 1.330;
}

.plot .y-labels text {
    fill: #6e7079;
    text-anchor: end;
}

.plot .x-labels text {
    fill: #6e7079;
    text-anchor: middle;
}

.results {
    height: 55px;
    margin: 34px 21px 0 22px;
    border-bottom: 1px solid #f0f0f0;
    display: flex;
    gap: 42.5px;
    line-height: 54px;
}

.results svg {
    margin: 14px 8px 0 auto;
}

.watermark {
    position: absolute;
    left: 840px;
    top: 945px;
    overflow: visible;
}

.watermark text {
    fill: #e5e5e5;
    text-anchor: middle;
}

.watermark .wm-ar {
    font: 700 74px "DejaVu Sans", sans-serif;
    stroke: #e5e5e5;
    stroke-width: 2;
}

.wm-en {
    font: 700 36px Inter, sans-serif;
}
```
